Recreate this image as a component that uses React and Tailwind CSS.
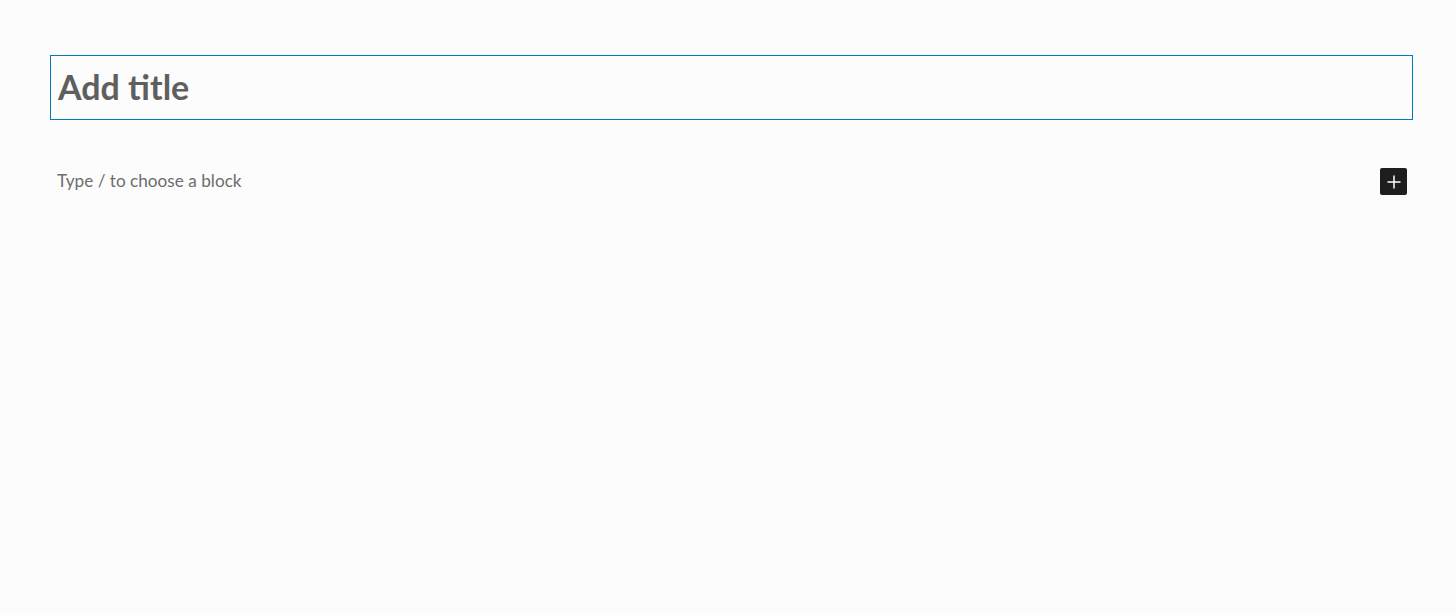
export default function App() {
  return (
    <div className="min-h-[615px] w-full bg-[#fcfcfc]" style={{ fontFamily: "Lato, 'Noto Sans', sans-serif" }}>
      <div className="pt-[55px] pl-[50px] pr-[43px]">
        <div className="flex h-[65px] items-center border border-[#007cba] px-[7px] pb-[2px]">
          <span className="text-[34px] font-bold leading-none text-[#5f5f5f]">Add title</span>
        </div>
        <div className="mt-[47px] flex items-center justify-between pl-[7px] pr-[6px]">
          <span className="text-[17.2px] leading-none text-[#6d6d6d]">Type / to choose a block</span>
          <button className="mt-[1px] flex h-[27px] w-[27px] items-center justify-center rounded-[2px] bg-[#1e1e1e]">
            <svg width="14" height="14" viewBox="0 0 14 14">
              <path d="M7 0.5v13M0.5 7h13" stroke="#fff" strokeWidth="1.5" fill="none" />
            </svg>
          </button>
        </div>
      </div>
    </div>
  );
}
